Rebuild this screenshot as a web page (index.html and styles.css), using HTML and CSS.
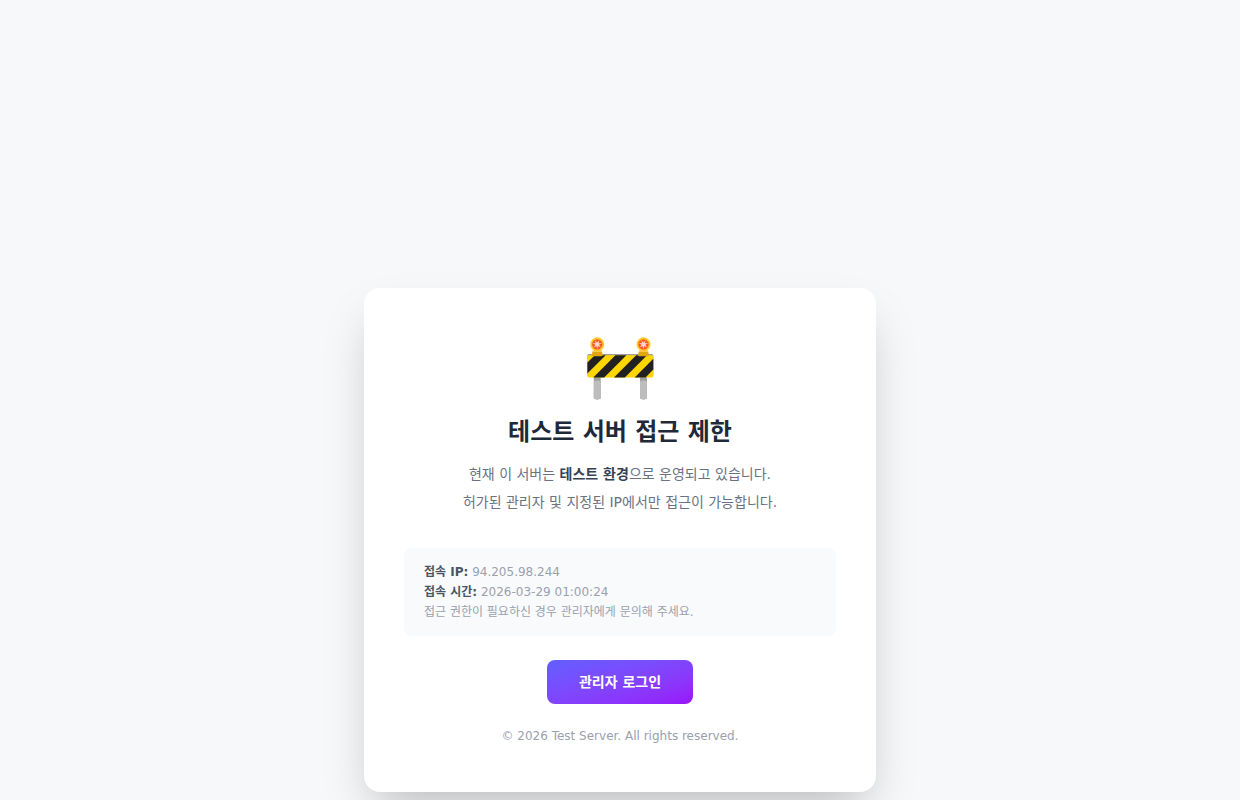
FILE: index.html
```html
<!DOCTYPE html>
<html lang="ko">
<head>
    <meta charset="UTF-8">
    <meta name="viewport" content="width=device-width, initial-scale=1.0">
    <title>테스트 서버 접근 제한</title>
    <link rel="stylesheet" href="styles.css">
</head>
<body>
    <main class="card">
        <div class="icon">🚧</div>
        <h1>테스트 서버 접근 제한</h1>
        <p class="message">
            현재 이 서버는 <strong>테스트 환경</strong>으로 운영되고 있습니다.<br>
            허가된 관리자 및 지정된 IP에서만 접근이 가능합니다.
        </p>

        <!-- 접속 정보 -->
        <div class="info">
            <strong>접속 IP:</strong> 94.205.98.244<br>
            <strong>접속 시간:</strong> 2026-03-29 01:00:24<br>
            접근 권한이 필요하신 경우 관리자에게 문의해 주세요.
        </div>

        <a href="#" class="login-btn">관리자 로그인</a>
        <footer>© 2026 Test Server. All rights reserved.</footer>
    </main>
</body>
</html>
```
FILE: styles.css
```css
* {
    box-sizing: border-box;
    margin: 0;
    padding: 0;
}

body {
    min-height: 100vh;
    padding: 288px 20px 8px;
    background: #f7f8fa;
    font-family: "DejaVu Sans", "Noto Sans CJK KR", sans-serif;
}

/* 안내 카드 */
.card {
    max-width: 512px;
    margin: 0 auto;
    padding: 48px 40px;
    background: #ffffff;
    border-radius: 16px;
    box-shadow: 0 25px 50px -12px rgba(0, 0, 0, 0.25);
    text-align: center;
}

.icon {
    margin-bottom: 20px;
    font-size: 60px;
    line-height: 60px;
}

h1 {
    margin-bottom: 12px;
    color: #1e2939;
    font-size: 24px;
    line-height: 32px;
}

.message {
    margin-bottom: 32px;
    color: #6a7282;
    font-size: 14px;
    line-height: 28px;
}

.message strong {
    color: #364153;
}

/* 접속 정보 */
.info {
    margin-bottom: 24px;
    padding: 14px 20px;
    background: #f9fafb;
    border-radius: 8px;
    color: #99a1af;
    font-size: 12px;
    line-height: 20px;
    text-align: left;
}

.info strong {
    color: #4a5565;
}

/* 로그인 버튼 */
.login-btn {
    display: inline-block;
    padding: 12px 32px;
    background: linear-gradient(to bottom right in oklab, #615fff, #9810fa);
    border-radius: 8px;
    color: #ffffff;
    font-size: 14px;
    font-weight: bold;
    line-height: 20px;
    text-decoration: none;
}

footer {
    margin-top: 24px;
    color: #99a1af;
    font-size: 12px;
    line-height: 16px;
}
```
